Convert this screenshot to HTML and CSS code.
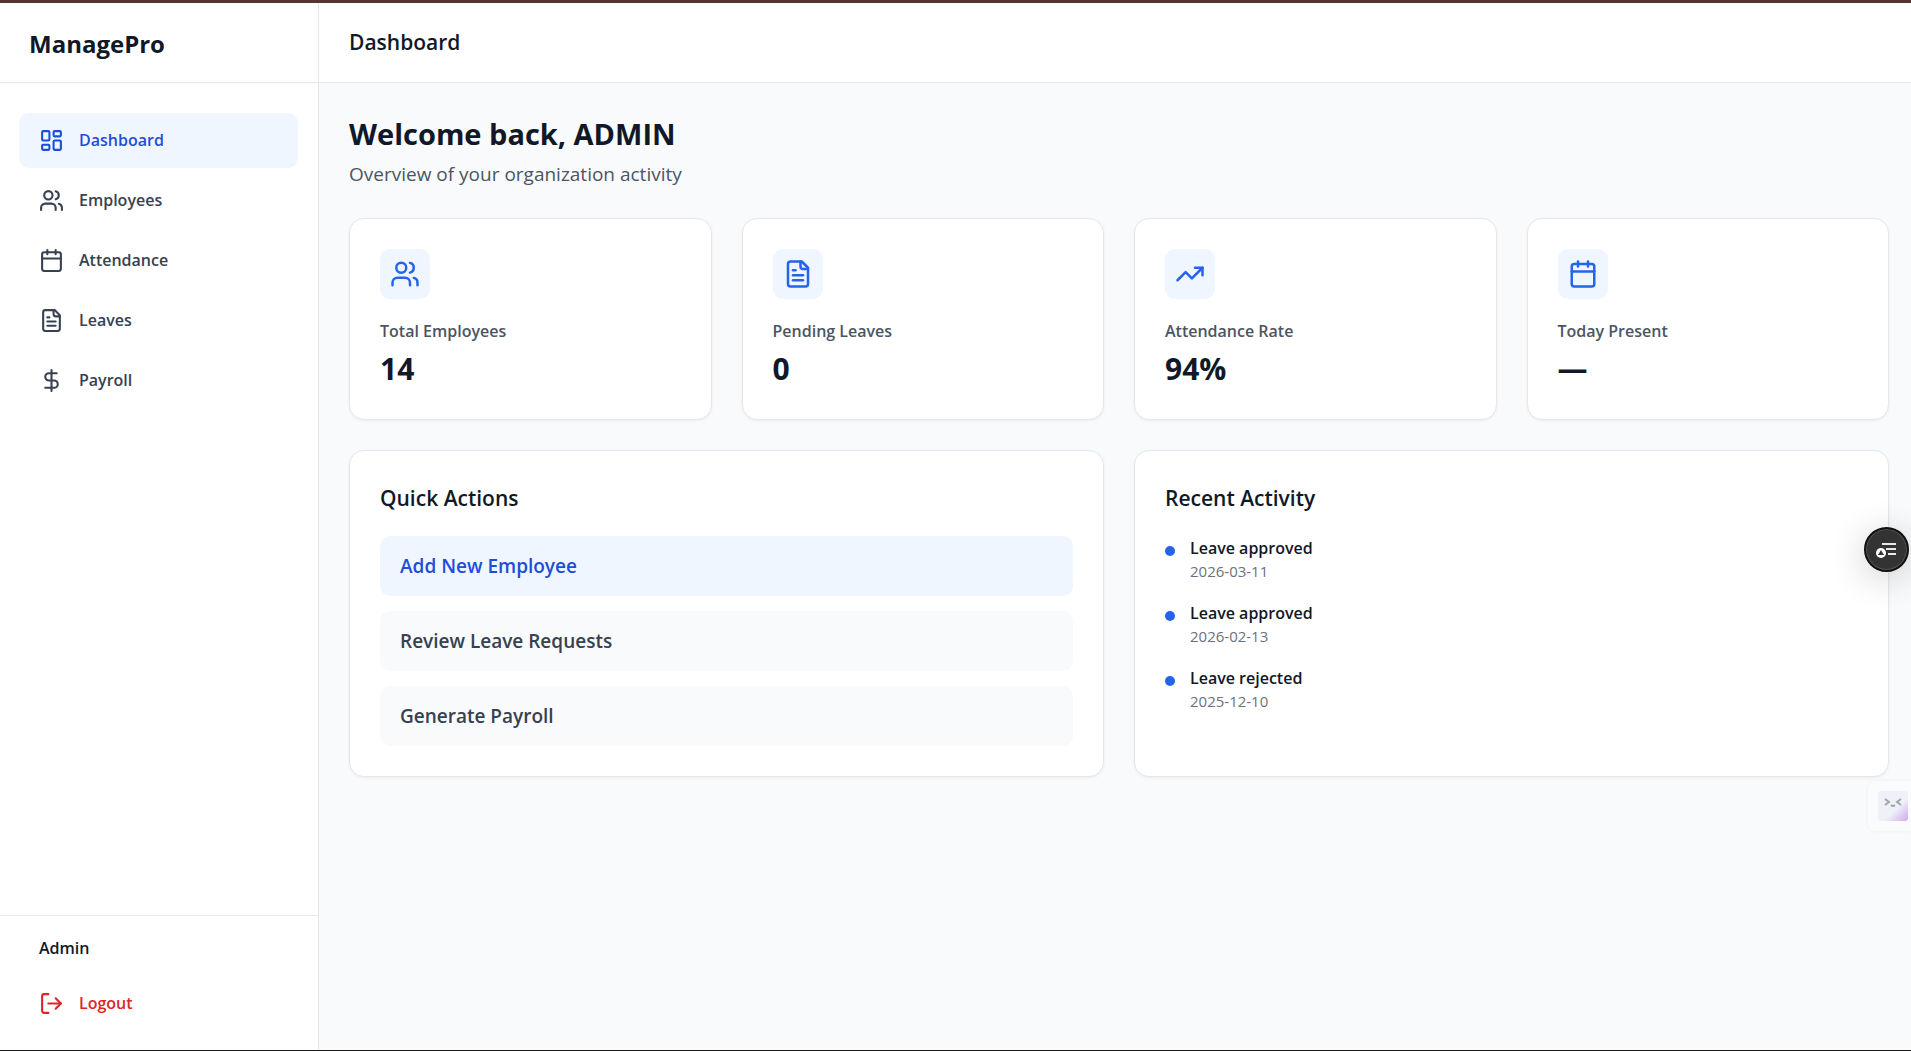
FILE: index.html
```html
<!DOCTYPE html>
<html lang="en">
<head>
    <meta charset="UTF-8">
    <meta name="viewport" content="width=device-width, initial-scale=1.0">
    <title>ManagePro - Dashboard</title>
    <link rel="stylesheet" href="styles.css">
</head>
<body>
    <!-- Shared icons -->
    <svg class="icon-defs" aria-hidden="true">
        <symbol id="icon-dashboard" viewBox="0 0 24 24">
            <rect width="7" height="9" x="3" y="3" rx="1"/>
            <rect width="7" height="5" x="14" y="3" rx="1"/>
            <rect width="7" height="9" x="14" y="12" rx="1"/>
            <rect width="7" height="5" x="3" y="16" rx="1"/>
        </symbol>
        <symbol id="icon-users" viewBox="0 0 24 24">
            <path d="M16 21v-2a4 4 0 0 0-4-4H6a4 4 0 0 0-4 4v2"/>
            <circle cx="9" cy="7" r="4"/>
            <path d="M22 21v-2a4 4 0 0 0-3-3.87"/>
            <path d="M16 3.13a4 4 0 0 1 0 7.75"/>
        </symbol>
        <symbol id="icon-calendar" viewBox="0 0 24 24">
            <path d="M8 2v4"/>
            <path d="M16 2v4"/>
            <rect width="18" height="18" x="3" y="4" rx="2"/>
            <path d="M3 10h18"/>
        </symbol>
        <symbol id="icon-file" viewBox="0 0 24 24">
            <path d="M15 2H6a2 2 0 0 0-2 2v16a2 2 0 0 0 2 2h12a2 2 0 0 0 2-2V7Z"/>
            <path d="M14 2v4a2 2 0 0 0 2 2h4"/>
            <path d="M10 9H8"/>
            <path d="M16 13H8"/>
            <path d="M16 17H8"/>
        </symbol>
        <symbol id="icon-dollar" viewBox="0 0 24 24">
            <path d="M12 2v20"/>
            <path d="M17 5H9.500a3.500 3.500 0 0 0 0 7h5a3.500 3.500 0 0 1 0 7H6"/>
        </symbol>
        <symbol id="icon-trend" viewBox="0 0 24 24">
            <path d="M22 7l-8.500 8.500-5-5L2 17"/>
            <path d="M16 7h6v6"/>
        </symbol>
        <symbol id="icon-logout" viewBox="0 0 24 24">
            <path d="M9 21H5a2 2 0 0 1-2-2V5a2 2 0 0 1 2-2h4"/>
            <path d="M16 17l5-5-5-5"/>
            <path d="M21 12H9"/>
        </symbol>
    </svg>

    <div class="layout">
        <!-- Sidebar -->
        <aside class="sidebar">
            <div class="brand">ManagePro</div>
            <nav class="nav">
                <a href="#" class="nav-link active"><svg class="icon"><use href="#icon-dashboard"/></svg>Dashboard</a>
                <a href="#" class="nav-link"><svg class="icon"><use href="#icon-users"/></svg>Employees</a>
                <a href="#" class="nav-link"><svg class="icon"><use href="#icon-calendar"/></svg>Attendance</a>
                <a href="#" class="nav-link"><svg class="icon"><use href="#icon-file"/></svg>Leaves</a>
                <a href="#" class="nav-link"><svg class="icon"><use href="#icon-dollar"/></svg>Payroll</a>
            </nav>
            <div class="sidebar-footer">
                <p class="user-name">Admin</p>
                <button type="button" class="nav-link logout"><svg class="icon"><use href="#icon-logout"/></svg>Logout</button>
            </div>
        </aside>

        <div class="page">
            <header class="topbar">
                <h2>Dashboard</h2>
            </header>

            <main class="content">
                <div class="welcome">
                    <h1>Welcome back, ADMIN</h1>
                    <p>Overview of your organization activity</p>
                </div>

                <!-- Stats -->
                <section class="stats">
                    <div class="card">
                        <div class="stat-icon"><svg class="icon"><use href="#icon-users"/></svg></div>
                        <p class="stat-label">Total Employees</p>
                        <p class="stat-value">14</p>
                    </div>
                    <div class="card">
                        <div class="stat-icon"><svg class="icon"><use href="#icon-file"/></svg></div>
                        <p class="stat-label">Pending Leaves</p>
                        <p class="stat-value">0</p>
                    </div>
                    <div class="card">
                        <div class="stat-icon"><svg class="icon"><use href="#icon-trend"/></svg></div>
                        <p class="stat-label">Attendance Rate</p>
                        <p class="stat-value">94%</p>
                    </div>
                    <div class="card">
                        <div class="stat-icon"><svg class="icon"><use href="#icon-calendar"/></svg></div>
                        <p class="stat-label">Today Present</p>
                        <p class="stat-value">—</p>
                    </div>
                </section>

                <section class="panels">
                    <div class="card">
                        <h3>Quick Actions</h3>
                        <div class="actions">
                            <button type="button" class="action primary">Add New Employee</button>
                            <button type="button" class="action">Review Leave Requests</button>
                            <button type="button" class="action">Generate Payroll</button>
                        </div>
                    </div>
                    <div class="card">
                        <h3>Recent Activity</h3>
                        <ul class="activity">
                            <li>
                                <span class="dot"></span>
                                <div>
                                    <p class="activity-title">Leave approved</p>
                                    <p class="activity-date">2026-03-11</p>
                                </div>
                            </li>
                            <li>
                                <span class="dot"></span>
                                <div>
                                    <p class="activity-title">Leave approved</p>
                                    <p class="activity-date">2026-02-13</p>
                                </div>
                            </li>
                            <li>
                                <span class="dot"></span>
                                <div>
                                    <p class="activity-title">Leave rejected</p>
                                    <p class="activity-date">2025-12-10</p>
                                </div>
                            </li>
                        </ul>
                    </div>
                </section>
            </main>
        </div>
    </div>

    <!-- Floating widgets -->
    <button type="button" class="reader-button" aria-label="Open reader">
        <svg viewBox="0 0 22 16" width="22" height="16">
            <path d="M6 2h14M10 7h10M12 12h8" fill="none" stroke="#e8e8e8" stroke-width="2"/>
            <circle cx="5" cy="11" r="5" fill="#fff"/>
            <path d="M5 8l3 5H2z" fill="#333"/>
        </svg>
    </button>
    <button type="button" class="assistant-button" aria-label="Open assistant">
        <span class="assistant-face">
            <svg viewBox="0 0 20 12" width="20" height="12" fill="none" stroke="#a3a5ab" stroke-width="2">
                <path d="M2 2l4 3-4 3M18 2l-4 3 4 3M8 8q2 2 4 0"/>
            </svg>
        </span>
    </button>
</body>
</html>
```
FILE: styles.css
```css
* {
    box-sizing: border-box;
    margin: 0;
    padding: 0;
}
body {
    font-family: "Open Sans", "Noto Sans", sans-serif;
    color: #111827;
    background-color: #f9fafb;
}
button {
    font-family: inherit;
    border: none;
    background: none;
    cursor: pointer;
}
.icon-defs {
    position: absolute;
    width: 0;
    height: 0;
}
.icon {
    width: 25px;
    height: 25px;
    flex-shrink: 0;
    fill: none;
    stroke: currentColor;
    stroke-width: 2;
    stroke-linecap: round;
    stroke-linejoin: round;
}
.layout {
    display: flex;
    min-height: 100vh;
    border-top: 3px solid #553533;
    border-bottom: 1px solid #1a1a1a;
}

/* Sidebar */
.sidebar {
    display: flex;
    flex-direction: column;
    width: 319px;
    flex-shrink: 0;
    background: white;
    border-right: 1px solid #e5e7eb;
}
.brand {
    height: 80px;
    padding: 0 29px;
    line-height: 82px;
    font-size: 24px;
    font-weight: 700;
    border-bottom: 1px solid #e5e7eb;
}
.nav {
    display: flex;
    flex-direction: column;
    flex: 1;
    gap: 5px;
    padding: 30px 20px 30px 19px;
}
.nav-link {
    display: flex;
    align-items: center;
    gap: 15px;
    padding: 15px 20px;
    border-radius: 10px;
    font-size: 16px;
    font-weight: 600;
    line-height: 25px;
    color: #374151;
    text-decoration: none;
}
.nav-link.active {
    color: #1d4ed8;
    background: #eff6ff;
}
.sidebar-footer {
    padding: 20px 20px 19px 19px;
    border-top: 1px solid #e5e7eb;
}
.user-name {
    padding: 0 20px;
    margin-bottom: 15px;
    font-size: 16px;
    font-weight: 600;
    line-height: 25px;
}
.logout {
    width: 100%;
    color: #dc2626;
}

/* Main */
.page {
    flex: 1;
    min-width: 0;
}
.topbar {
    height: 80px;
    padding: 0 30px;
    background: white;
    border-bottom: 1px solid #e5e7eb;
}
.topbar h2 {
    font-size: 21px;
    font-weight: 600;
    line-height: 79px;
}
.content {
    padding: 30px 22px 30px 30px;
}
.welcome {
    margin-bottom: 30px;
}
.welcome h1 {
    margin-bottom: 5px;
    font-size: 29px;
    font-weight: 700;
    line-height: 42px;
}
.welcome p {
    font-size: 19px;
    line-height: 28px;
    color: #4b5563;
}
.stats {
    display: grid;
    grid-template-columns: repeat(4, 1fr);
    gap: 30px;
    margin-bottom: 30px;
}
.card {
    padding: 30px;
    background: white;
    border: 1px solid #e5e7eb;
    border-radius: 15px;
    box-shadow: 0 1px 3px rgba(0,0,0,0.06);
}
.stat-icon {
    display: flex;
    justify-content: center;
    align-items: center;
    width: 50px;
    height: 50px;
    margin-bottom: 20px;
    border-radius: 10px;
    color: #2563eb;
    background: #eff6ff;
}
.stat-icon .icon {
    width: 30px;
    height: 30px;
}
.stat-label {
    margin-bottom: 5px;
    font-size: 16px;
    font-weight: 600;
    line-height: 25px;
    color: #4b5563;
}
.stat-value {
    font-size: 30px;
    font-weight: 700;
    line-height: 40px;
}
.panels {
    display: grid;
    grid-template-columns: repeat(2, 1fr);
    gap: 30px;
}
.card h3 {
    margin-bottom: 20px;
    font-size: 21px;
    font-weight: 600;
    line-height: 35px;
}
.actions {
    display: flex;
    flex-direction: column;
    gap: 15px;
}
.action {
    padding: 15px 20px;
    border-radius: 10px;
    font-size: 19px;
    font-weight: 600;
    line-height: 30px;
    text-align: left;
    color: #374151;
    background: #f9fafb;
}
.action.primary {
    color: #1d4ed8;
    background: #eff6ff;
}
.activity {
    display: flex;
    flex-direction: column;
    gap: 20px;
    list-style: none;
}
.activity li {
    display: flex;
    gap: 15px;
}
.dot {
    width: 10px;
    height: 10px;
    margin-top: 10px;
    border-radius: 50%;
    background: #2563eb;
}
.activity-title {
    font-size: 16px;
    font-weight: 600;
    line-height: 25px;
}
.activity-date {
    font-size: 15px;
    line-height: 20px;
    color: #6b7280;
}

/* Floating widgets */
.reader-button {
    position: fixed;
    top: 527px;
    right: 2px;
    display: flex;
    justify-content: center;
    align-items: center;
    width: 45px;
    height: 45px;
    border: 2px solid #111;
    border-radius: 50%;
    background: #333;
    box-shadow: inset 0 0 0 1px #555, 0 6px 36px rgba(0,0,0,0.2);
}
.assistant-button {
    position: fixed;
    top: 781px;
    right: 0;
    padding: 10px 3px 10px 10px;
    border-radius: 8px 0 0 8px;
    background: #fafbfc;
    box-shadow: 0 0 4px rgba(0,0,0,0.05);
}
.assistant-face {
    display: flex;
    justify-content: center;
    width: 30px;
    height: 30px;
    padding-top: 6px;
    border-radius: 3px;
    background: linear-gradient(135deg, #eef1f7 60%, #cfa8f0);
}
```
